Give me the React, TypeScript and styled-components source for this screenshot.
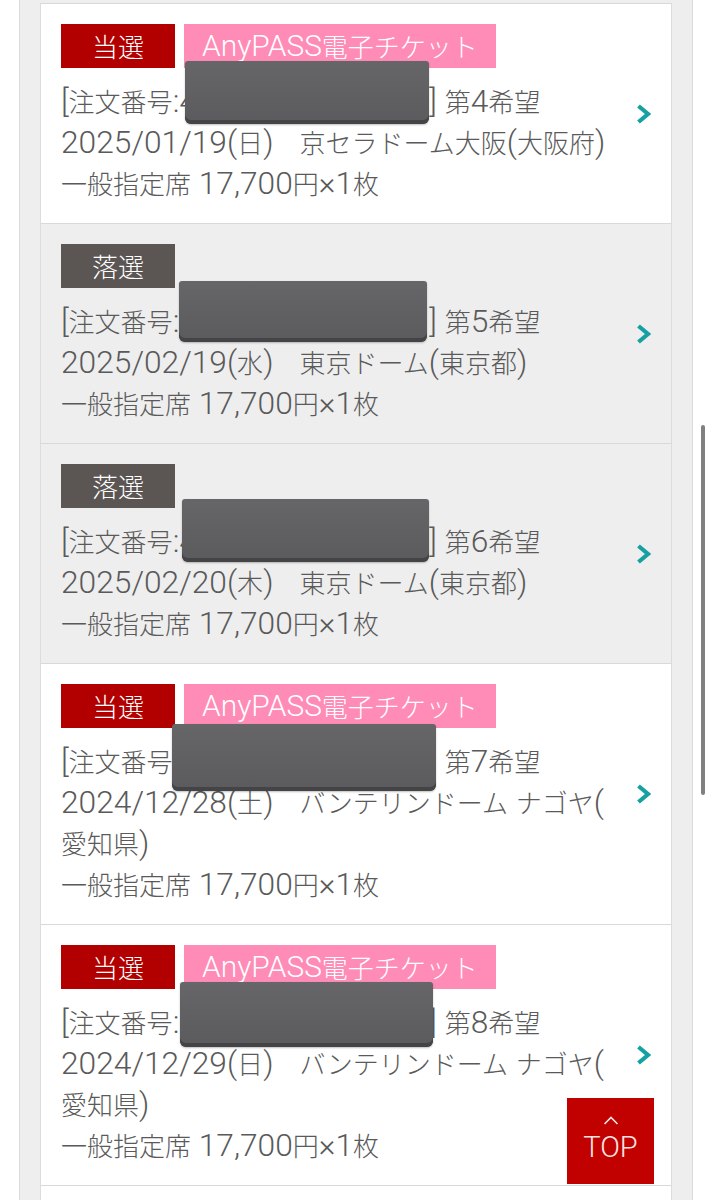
import React from 'react';
import styled, { createGlobalStyle } from 'styled-components';

const GlobalStyle = createGlobalStyle`
  html, body {
    margin: 0;
    padding: 0;
    background: #ffffff;
    height: 1200px;
    overflow: hidden;
  }
  body {
    font-family: "Noto Sans CJK JP", "Noto Sans", sans-serif;
    -webkit-font-smoothing: antialiased;
  }
`;

type Status = 'win' | 'lose';

interface Entry {
  status: Status;
  ticket: boolean;
  order: string;
  wish: number;
  date: string;
  venue: string;
  seat: string;
  // redaction sticker over the order number, relative to the text column
  mask: { top: number; left: number; width: number; height: number };
}

const entries: Entry[] = [
  {
    status: 'win',
    ticket: true,
    order: '4000000000000',
    wish: 4,
    date: '2025/01/19(日)',
    venue: '京セラドーム大阪(大阪府)',
    seat: '一般指定席 17,700円×1枚',
    mask: { top: 37, left: 124, width: 244, height: 63 },
  },
  {
    status: 'lose',
    ticket: false,
    order: '4000000000000',
    wish: 5,
    date: '2025/02/19(水)',
    venue: '東京ドーム(東京都)',
    seat: '一般指定席 17,700円×1枚',
    mask: { top: 37, left: 118, width: 248, height: 61 },
  },
  {
    status: 'lose',
    ticket: false,
    order: '4000000000000',
    wish: 6,
    date: '2025/02/20(木)',
    venue: '東京ドーム(東京都)',
    seat: '一般指定席 17,700円×1枚',
    mask: { top: 35, left: 121, width: 247, height: 63 },
  },
  {
    status: 'win',
    ticket: true,
    order: '4000000000000',
    wish: 7,
    date: '2024/12/28(土)',
    venue: 'バンテリンドーム ナゴヤ(愛知県)',
    seat: '一般指定席 17,700円×1枚',
    mask: { top: 40, left: 111, width: 264, height: 67 },
  },
  {
    status: 'win',
    ticket: true,
    order: '4000000000000',
    wish: 8,
    date: '2024/12/29(日)',
    venue: 'バンテリンドーム ナゴヤ(愛知県)',
    seat: '一般指定席 17,700円×1枚',
    mask: { top: 37, left: 119, width: 253, height: 65 },
  },
  {
    status: 'win',
    ticket: true,
    order: '4000000000000',
    wish: 9,
    date: '2024/12/30(月)',
    venue: 'バンテリンドーム ナゴヤ(愛知県)',
    seat: '一般指定席 17,700円×1枚',
    mask: { top: 37, left: 119, width: 253, height: 65 },
  },
];

const Page = styled.div`
  margin: 0 19px;
  padding: 3px 20px 0;
  min-height: 1200px;
  box-sizing: border-box;
  background: #eeeeee;
  border-left: 1px solid #dadada;
  border-right: 1px solid #dadada;
`;

const List = styled.ul`
  list-style: none;
  margin: 0;
  padding: 0;
  border-left: 1px solid #dcdcdc;
  border-right: 1px solid #dcdcdc;
`;

const Row = styled.li<{ $shaded: boolean }>`
  display: flex;
  align-items: center;
  gap: 18px;
  padding: 20px;
  border-top: 1px solid #d9d9d9;
  background: ${(p) => (p.$shaded ? '#eeeeee' : '#ffffff')};
`;

const Content = styled.div`
  position: relative;
  flex: 1;
  min-width: 0;
`;

const Badges = styled.div`
  display: flex;
  gap: 9px;
  margin-bottom: 12px;
`;

const Badge = styled.span<{ $kind: 'win' | 'lose' | 'ticket' }>`
  display: inline-flex;
  align-items: center;
  justify-content: center;
  height: 44px;
  box-sizing: border-box;
  padding: ${(p) => (p.$kind === 'ticket' ? '0 18px' : '0 31px')};
  font-size: 26px;
  font-weight: 300;
  line-height: 1;
  color: #ffffff;
  background: ${(p) =>
    p.$kind === 'win' ? '#b20000' : p.$kind === 'lose' ? '#5b5553' : '#fe8cb6'};
`;

const Line = styled.div`
  font-size: 26px;
  font-weight: 300;
  line-height: 41px;
  color: #5a5a5a;
  line-break: anywhere;
`;

// Latin runs are set a touch larger so they sit level with the kana
const Latin = styled.span<{ $scale?: number }>`
  font-family: Roboto, "Liberation Sans", Arial, sans-serif;
  font-weight: 300;
  font-size: ${(p) => p.$scale ?? 1.22}em;
  line-height: 1;
`;

const NumberSlot = styled.span`
  display: inline-block;
  width: 250px;
  overflow: hidden;
  white-space: nowrap;
  vertical-align: bottom;
`;

const Mask = styled.div`
  position: absolute;
  z-index: 2;
  background: linear-gradient(#666668, #5b5b5d);
  border-radius: 3px 3px 6px 6px;
  box-shadow: inset 0 -4px 0 #444446, 0 1px 2px rgba(0, 0, 0, 0.25);
`;

const Chevron = styled.svg`
  flex: none;
  width: 15px;
  height: 20px;
`;

const TopButton = styled.a`
  position: fixed;
  right: 58px;
  bottom: 16px;
  width: 87px;
  height: 86px;
  display: flex;
  flex-direction: column;
  align-items: center;
  justify-content: center;
  gap: 8px;
  background: #c10000;
  color: #fbe3e3;
  text-decoration: none;
  font-family: Roboto, "Liberation Sans", Arial, sans-serif;
  font-weight: 300;
  font-size: 29px;
  line-height: 1;
  padding-bottom: 4px;
  box-sizing: border-box;
`;

const ScrollThumb = styled.div`
  position: fixed;
  right: 7px;
  top: 425px;
  width: 4px;
  height: 370px;
  border-radius: 2px;
  background: #808080;
`;

const latinRun = /([\x20-\x7E\u00D7]+)/;

const Mixed: React.FC<{ text: string; scale?: number }> = ({ text, scale }) => (
  <>
    {text.split(latinRun).map((part, i) =>
      part === '' ? null : latinRun.test(part) ? (
        <Latin key={i} $scale={scale}>
          {part}
        </Latin>
      ) : (
        <React.Fragment key={i}>{part}</React.Fragment>
      )
    )}
  </>
);

const Arrow = () => (
  <Chevron viewBox="0 0 15 20">
    <polyline
      points="2.5,2 12,10 2.5,18"
      fill="none"
      stroke="#17a0a2"
      strokeWidth="4.2"
      strokeLinejoin="miter"
    />
  </Chevron>
);

const LotteryRow: React.FC<{ entry: Entry }> = ({ entry }) => (
  <Row $shaded={entry.status === 'lose'}>
    <Content>
      <Badges>
        <Badge $kind={entry.status}>{entry.status === 'win' ? '当選' : '落選'}</Badge>
        {entry.ticket && (
          <Badge $kind="ticket">
            <Mixed text="AnyPASS" scale={1.15} />
            電子チケット
          </Badge>
        )}
      </Badges>
      <Line>
        <Latin>[</Latin>注文番号<Latin>:</Latin>
        <NumberSlot>
          <Latin>{entry.order}</Latin>
        </NumberSlot>
        <Latin>] </Latin>第<Latin>{entry.wish}</Latin>希望
      </Line>
      <Line>
        <Mixed text={entry.date} />　<Mixed text={entry.venue} />
      </Line>
      <Line>
        <Mixed text={entry.seat} />
      </Line>
      <Mask style={entry.mask} />
    </Content>
    <Arrow />
  </Row>
);

const App: React.FC = () => (
  <>
    <GlobalStyle />
    <Page>
      <List>
        {entries.map((e) => (
          <LotteryRow key={e.wish} entry={e} />
        ))}
      </List>
    </Page>
    <TopButton href="#top">
      <svg width="16" height="9" viewBox="0 0 16 9">
        <polyline points="1.5,8 8,1.5 14.5,8" fill="none" stroke="#fbe3e3" strokeWidth="1.6" />
      </svg>
      TOP
    </TopButton>
    <ScrollThumb />
  </>
);

export default App;
